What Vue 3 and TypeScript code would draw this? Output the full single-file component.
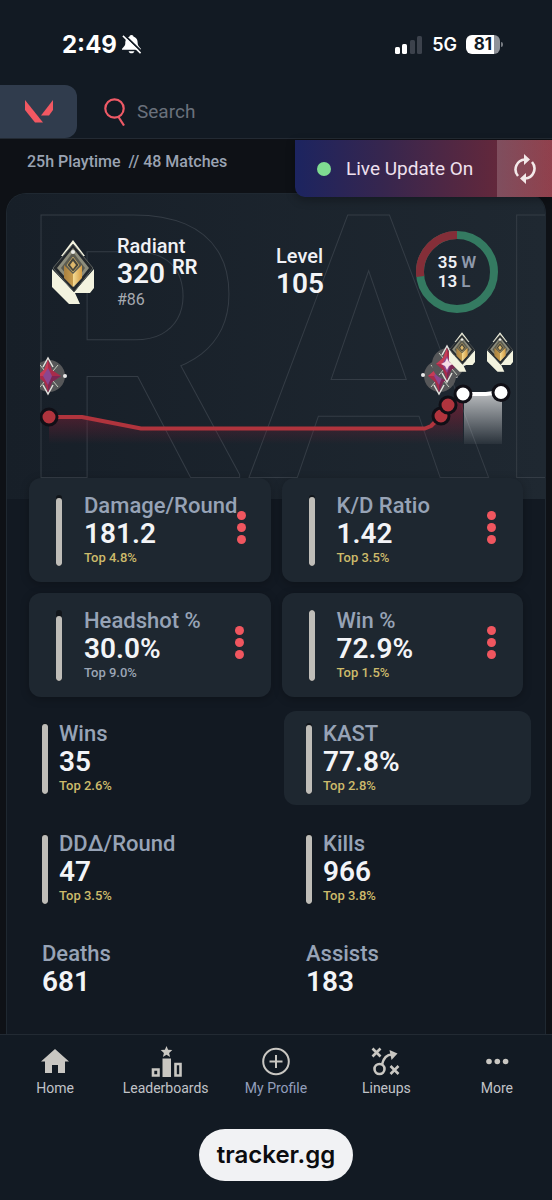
<script setup lang="ts">
interface Stat {
  label: string
  value: string
  top?: string
  muted?: boolean
  fill: number
  active?: boolean
}

const featured: Stat[] = [
  { label: 'Damage/Round', value: '181.2', top: 'Top 4.8%', fill: 95 },
  { label: 'K/D Ratio', value: '1.42', top: 'Top 3.5%', fill: 97 },
  { label: 'Headshot %', value: '30.0%', top: 'Top 9.0%', muted: true, fill: 91 },
  { label: 'Win %', value: '72.9%', top: 'Top 1.5%', fill: 99 },
]

const stats: Stat[] = [
  { label: 'Wins', value: '35', top: 'Top 2.6%', fill: 98 },
  { label: 'KAST', value: '77.8%', top: 'Top 2.8%', fill: 97, active: true },
  { label: 'DDΔ/Round', value: '47', top: 'Top 3.5%', fill: 97 },
  { label: 'Kills', value: '966', top: 'Top 3.8%', fill: 97 },
  { label: 'Deaths', value: '681', fill: 0 },
  { label: 'Assists', value: '183', fill: 0 },
]

const radiantMarks = [
  { x: 449, y: 332 },
  { x: 487, y: 332 },
]
const immortalMarks = [
  { x: 48, y: 376 },
  { x: 439, y: 376 },
  { x: 447, y: 364 },
]
</script>

<template>
  <div class="page">
    <svg class="defs" width="0" height="0" aria-hidden="true">
      <defs>
        <linearGradient id="gold" x1="0" x2="1">
          <stop offset="0" stop-color="#a9803f" />
          <stop offset=".48" stop-color="#c69a4c" />
          <stop offset=".5" stop-color="#f5dc96" />
          <stop offset="1" stop-color="#d59d43" />
        </linearGradient>
        <symbol id="radiant" viewBox="0 0 42 64">
          <path d="M0 29 22 52 42 29V48L38 53H23L28 64H17L0 47Z" fill="#f3f3df" />
          <path d="M21 0 33 16H9Z" fill="#f3f3df" />
          <path d="M21 4 41 28 22 52 1 28Z" fill="#23282c" stroke="#5d625f" stroke-width="1" />
          <path d="M21 8 37 28 22 47 5 28Z" fill="#8d8d7c" />
          <path d="M21 12 33 28 22 44 9 28Z" fill="#5b5b50" />
          <path d="M12 25 21 34 30 25V38L21 47 12 38Z" fill="url(#gold)" />
          <path d="M21 17 27 25 21 32 15 25Z" fill="#44443b" stroke="#b79e62" stroke-width="1" />
          <path d="M21 21 24 25 21 29 18 25Z" fill="#ddb86c" />
          <circle cx="21" cy="12" r="2" fill="#eceeea" />
        </symbol>
        <symbol id="immortal" viewBox="0 0 40 40">
          <circle cx="20" cy="20" r="16" fill="#565759" />
          <path d="m11 9 5 6M29 9l-5 6M11 31l5-6M29 31l-5-6" stroke="#c5cbbd" stroke-width="1" />
          <path d="M14 11 19 2 24 11M14 29l5 9 5-9" fill="none" stroke="#e4e1dd" stroke-width="1.5" />
          <path d="M19 4 23 14 32 20 23 26 19 36 15 26 8 20 15 14Z" fill="#a82b4b" />
          <path d="M19 4 19 20 8 20 15 14Z" fill="#c63c56" />
          <path d="M19 20 32 20 23 26 19 36Z" fill="#7b2754" />
          <path d="M19 12 23 20 19 29 14 20Z" fill="#8b4690" />
          <circle cx="36" cy="20" r="2" fill="#e9e9e9" />
        </symbol>
      </defs>
    </svg>

    <div class="status">
      <div class="clock">
        <span>2:49</span>
        <svg width="21" height="21" viewBox="0 0 22 22" aria-label="Silent">
          <path d="M11 1C9.500 1 9 2 8.700 2.800 5 4 4.500 7 4.500 10c0 3-3.500 4.500-3.500 6.500h20C21 14.500 17.500 13 17.500 10c0-3-.5-6-4.200-7.200C13 2 12.500 1 11 1ZM8 18h6c-.5 3-5.500 3-6 0Z" fill="#fff" />
          <path d="M3.500 1 22 19" stroke="#121a23" stroke-width="2" />
          <path d="M2 2 20.500 20" stroke="#fff" stroke-width="1.600" />
        </svg>
      </div>
      <div class="signal">
        <svg width="28" height="18" viewBox="0 0 28 18" aria-label="Signal">
          <rect x="0" y="11" width="5" height="7" rx="1.500" fill="#fff" />
          <rect x="7" y="8" width="5" height="10" rx="1.500" fill="#fff" />
          <rect x="15" y="4" width="5" height="14" rx="1.500" fill="#3c424c" />
          <rect x="22" y="0" width="5" height="18" rx="1.500" fill="#3c424c" />
        </svg>
        <span class="network">5G</span>
        <span class="battery">81</span>
      </div>
    </div>

    <header class="header">
      <button class="game" type="button" aria-label="Valorant">
        <svg width="28" height="23" viewBox="0 0 28 23">
          <path d="M0 0 18 22.500H10L0 10Z" fill="#f25862" />
          <path d="M28 0V10L24 15.500H16Z" fill="#f25862" />
        </svg>
      </button>
      <label class="search">
        <svg width="22" height="28" viewBox="0 0 22 28" fill="none" stroke="#ee5a66" stroke-width="2.200" aria-hidden="true">
          <circle cx="10.500" cy="10.500" r="9.200" />
          <path d="m14.500 19 5.500 8.500" />
        </svg>
        <input type="text" placeholder="Search" aria-label="Search" />
      </label>
    </header>

    <div class="session">
      <p>25h Playtime&nbsp; // 48 Matches</p>
      <div class="live">
        <span class="live-text"><i></i>Live Update On</span>
        <button type="button" aria-label="Refresh">
          <svg width="24" height="30" viewBox="0 0 24 30" fill="none" stroke="#f3e9e9" stroke-width="2.600">
            <path d="M5 22A10 10 0 0 1 12 5.500M19 8A10 10 0 0 1 12 24.500" />
            <path d="M11 0 17 5.500 11 11ZM13 19 7 24.500 13 30Z" fill="#f3e9e9" stroke="none" />
          </svg>
        </button>
      </div>
    </div>

    <main class="card">
      <section class="hero">
        <svg class="watermark" aria-hidden="true">
          <defs>
            <linearGradient id="heroFill" x1="0" y1="0" x2="538" y2="0" gradientUnits="userSpaceOnUse">
              <stop offset="0" stop-color="#171f28" />
              <stop offset="1" stop-color="#1f2831" />
            </linearGradient>
          </defs>
          <text x="8" y="283">RAD</text>
        </svg>
        <div class="summary">
          <div class="rank">
            <svg width="42" height="64" aria-label="Radiant rank"><use href="#radiant" /></svg>
            <div>
              <div class="caption">Radiant</div>
              <div class="big">320 <sup>RR</sup></div>
              <div class="place">#86</div>
            </div>
          </div>
          <div class="level">
            <div class="caption">Level</div>
            <div class="big">105</div>
          </div>
          <div class="record">
            <svg width="82" height="82" viewBox="0 0 82 82" aria-hidden="true">
              <circle cx="41" cy="41" r="37" fill="none" stroke="#347a61" stroke-width="8" />
              <path d="M4.300 45.500A37 37 0 0 1 41 4" fill="none" stroke="#842e38" stroke-width="8" />
            </svg>
            <div class="tally">
              <div>35 <span>W</span></div>
              <div>13 <span>L</span></div>
            </div>
          </div>
        </div>

        <svg class="chart" viewBox="7 325 538 130" role="img" aria-label="Rank rating history">
          <defs>
            <linearGradient id="redfade" x1="0" y1="400" x2="0" y2="444" gradientUnits="userSpaceOnUse">
              <stop offset="0" stop-color="#7b1f35" stop-opacity=".8" />
              <stop offset="1" stop-color="#7b1f35" stop-opacity="0" />
            </linearGradient>
            <linearGradient id="whitefade" x1="0" y1="392" x2="0" y2="444" gradientUnits="userSpaceOnUse">
              <stop offset="0" stop-color="#fff" stop-opacity=".7" />
              <stop offset="1" stop-color="#fff" stop-opacity=".05" />
            </linearGradient>
            <clipPath id="plot"><rect x="40" y="325" width="480" height="130" /></clipPath>
          </defs>
          <g clip-path="url(#plot)">
            <path d="M49 417H82L141 428H426L441 416 448 405 463 394V444H49Z" fill="url(#redfade)" />
            <path d="M464 394H487L502 392V444H464Z" fill="url(#whitefade)" />
            <path d="M49 417H82L141 428.500H425L431 426 441 416 448 405" fill="none" stroke="#b0343d" stroke-width="4" stroke-linejoin="round" />
            <path d="M463 394H486L501 392" fill="none" stroke="#fff" stroke-width="4" />
            <circle cx="49" cy="417" r="8" fill="#b0343d" stroke="#100f16" stroke-width="3" />
            <circle cx="441" cy="416" r="8" fill="#b0343d" stroke="#100f16" stroke-width="3" />
            <circle cx="448" cy="405" r="8" fill="#b0343d" stroke="#100f16" stroke-width="3" />
            <circle cx="463" cy="394" r="8" fill="#fff" stroke="#100f16" stroke-width="3" />
            <circle cx="501" cy="392.500" r="8" fill="#fff" stroke="#100f16" stroke-width="3" />
            <use v-for="m in immortalMarks" :key="m.x" href="#immortal" :x="m.x - 19" :y="m.y - 20" width="40" height="40" />
            <path d="m447 358 2 4 4 2-4 2-2 4-2-4-4-2 4-2Z" fill="#f5dce5" />
            <circle cx="423" cy="375" r="2" fill="#e9e9e9" />
            <use v-for="m in radiantMarks" :key="m.x" href="#radiant" :x="m.x" :y="m.y" width="26" height="40" />
          </g>
        </svg>
      </section>

      <section class="featured">
        <article v-for="s in featured" :key="s.label" class="tile">
          <div class="meter"><i :style="{ height: s.fill + '%' }"></i></div>
          <div class="info">
            <div class="label">{{ s.label }}</div>
            <div class="value">{{ s.value }}</div>
            <div class="top" :class="{ muted: s.muted }">{{ s.top }}</div>
          </div>
          <button type="button" class="dots" :aria-label="s.label + ' options'"><i></i><i></i><i></i></button>
        </article>
      </section>

      <section class="stats">
        <article v-for="s in stats" :key="s.label" class="stat" :class="{ active: s.active, plain: !s.top }">
          <div v-if="s.top" class="meter"><i :style="{ height: s.fill + '%' }"></i></div>
          <div class="info">
            <div class="label">{{ s.label }}</div>
            <div class="value">{{ s.value }}</div>
            <div v-if="s.top" class="top">{{ s.top }}</div>
          </div>
        </article>
      </section>
    </main>

    <footer class="footer">
      <nav>
        <a href="#home">
          <svg width="32" height="32" viewBox="0 0 32 32"><path d="M16 3 30 15.500H26V27H19V19H13V27H6V15.500H2Z" fill="#c9c7c2" /></svg>
          Home
        </a>
        <a href="#leaderboards">
          <svg width="32" height="32" viewBox="0 0 32 32">
            <path d="m16.500 0 1.600 3.800 4.200.3-3.200 2.800 1 4.100-3.600-2.200-3.600 2.200 1-4.100-3.200-2.800 4.200-.3Z" fill="#c9c7c2" />
            <path d="M12.500 12.500h8.500v18.500h-8.500Z" fill="#c9c7c2" />
            <path d="M3 23.500h5.500v6H3ZM25.500 18h5v11.500h-5Z" fill="none" stroke="#c9c7c2" stroke-width="2.600" />
          </svg>
          Leaderboards
        </a>
        <a href="#profile" class="current">
          <svg width="32" height="32" viewBox="0 0 32 32" fill="none" stroke="#c9c7c2" stroke-width="2"><circle cx="16" cy="15.500" r="12.800" /><path d="M16 9v13M9.500 15.500h13" /></svg>
          My Profile
        </a>
        <a href="#lineups">
          <svg width="32" height="32" viewBox="0 0 32 32" fill="none" stroke="#c9c7c2" stroke-width="2.600">
            <path d="m2.500 2.500 8 8M10.500 2.500l-8 8M20.500 20l8 8M28.500 20l-8 8" />
            <circle cx="9.500" cy="23" r="5" />
            <path d="M12 18.500C13.500 12 17 8.500 22 8.500" />
            <path d="M19.500 4 27.500 7.500 21.500 14Z" fill="#c9c7c2" stroke="none" />
          </svg>
          Lineups
        </a>
        <a href="#more">
          <svg width="32" height="32" viewBox="0 0 32 32" fill="#c9c7c2"><circle cx="8" cy="15.500" r="2.800" /><circle cx="16.300" cy="15.500" r="2.800" /><circle cx="24.600" cy="15.500" r="2.800" /></svg>
          More
        </a>
      </nav>
      <a class="site" href="#site">tracker.gg</a>
    </footer>
  </div>
</template>

<style>
body {
  background: #0e1116;
}
</style>

<style scoped>
* {
  box-sizing: border-box;
}
.page {
  display: flex;
  flex-direction: column;
  min-height: 100vh;
  background: #0e1116;
  color: #f0f1f5;
  font-family: Roboto, "Liberation Sans", sans-serif;
  overflow: hidden;
}
.defs {
  position: absolute;
}
button {
  border: 0;
  padding: 0;
  background: none;
  font: inherit;
}
svg {
  display: block;
  flex: none;
}
.status {
  display: flex;
  justify-content: space-between;
  align-items: center;
  height: 85px;
  padding: 4px 52px 0 62px;
  background: #121a23;
  color: #fff;
  font-family: Inter, "Liberation Sans", sans-serif;
  font-weight: 700;
}
.clock,
.signal {
  display: flex;
  align-items: center;
}
.clock {
  gap: 4px;
  font-size: 24px;
}
.signal {
  gap: 9px;
}
.network {
  font-size: 18px;
  font-weight: 600;
}
.battery {
  position: relative;
  width: 34px;
  height: 19px;
  border-radius: 6px;
  background: linear-gradient(90deg, #fff 81%, #8f9298 81%);
  color: #121a23;
  font-size: 17px;
  line-height: 19px;
  text-align: center;
}
.battery::after {
  content: "";
  position: absolute;
  left: 35px;
  top: 7px;
  width: 2px;
  height: 5px;
  border-radius: 0 2px 2px 0;
  background: #777b82;
}
.header {
  display: flex;
  height: 54px;
  background: #121a23;
  border-bottom: 1px solid #232a33;
}
.game {
  display: flex;
  justify-content: center;
  align-items: center;
  width: 77px;
  border-radius: 0 12px 12px 0;
  background: #303c4d;
}
.search {
  display: flex;
  flex: 1;
  align-items: center;
  gap: 11px;
  padding-left: 27px;
}
.search input {
  flex: 1;
  min-width: 0;
  border: 0;
  padding: 0;
  outline: 0;
  background: none;
  color: #f0f1f5;
  font: 400 19px Roboto, "Liberation Sans", sans-serif;
}
.search input::placeholder {
  color: #6a717c;
  opacity: 1;
}
.session {
  position: relative;
  z-index: 1;
  height: 54px;
}
.session p {
  margin: 0;
  padding: 11px 0 0 27px;
  color: #9aa3b2;
  font-size: 16px;
  font-weight: 500;
  line-height: 24px;
}
.live {
  position: absolute;
  top: 1px;
  right: 0;
  display: flex;
  width: 257px;
  height: 57px;
  border-radius: 0 0 0 10px;
  background: linear-gradient(90deg, #1c2460, #37264e 35%, #64283b 80%, #75303f);
  box-shadow: 0 3px 10px rgba(0, 0, 0, 0.3);
  overflow: hidden;
}
.live-text {
  display: flex;
  flex: 1;
  align-items: center;
  gap: 15px;
  padding-left: 22px;
  color: #efe0ee;
  font-size: 19px;
}
.live-text i {
  width: 14px;
  height: 14px;
  border-radius: 50%;
  background: #7fdc91;
}
.live button {
  display: flex;
  justify-content: center;
  align-items: center;
  width: 55px;
  background: linear-gradient(90deg, rgba(255, 255, 255, 0.18), rgba(255, 130, 130, 0.2));
}
.card {
  flex: 1;
  margin: 0 6px;
  border: 1px solid #1f2831;
  border-bottom: 0;
  border-radius: 20px 20px 0 0;
  background: #121922;
  overflow: hidden;
}
.hero {
  position: relative;
  height: 305px;
  background: linear-gradient(90deg, #171f28, #1f2831);
}
.watermark {
  position: absolute;
  inset: 0;
  width: 100%;
  height: 100%;
}
.watermark text {
  fill: url(#heroFill);
  stroke: #343c45;
  stroke-width: 2px;
  paint-order: stroke;
  font-size: 368px;
  font-weight: 500;
}
.summary {
  position: relative;
  display: grid;
  grid-template-columns: 224px 1fr auto;
  align-items: center;
  height: 131px;
  padding: 24px 47px 0 45px;
}
.rank {
  display: flex;
  align-items: center;
  gap: 23px;
}
.caption {
  font-size: 20px;
  font-weight: 500;
  line-height: 24px;
}
.big,
.value {
  color: #f3f4f7;
  font-size: 28px;
  font-weight: 600;
}
.big {
  line-height: 32px;
}
.value {
  line-height: 30px;
}
.big sup {
  font-size: 20px;
  line-height: 0;
  vertical-align: 9px;
}
.place {
  color: #a6aab1;
  font-size: 16px;
  line-height: 20px;
}
.record {
  display: grid;
  place-items: center;
}
.record > * {
  grid-area: 1 / 1;
}
.tally {
  font-size: 17px;
  font-weight: 600;
  line-height: 19px;
}
.tally span {
  color: #8f99ab;
}
.chart {
  position: relative;
  width: 100%;
  height: auto;
}
.featured {
  position: relative;
  display: grid;
  grid-template-columns: repeat(2, minmax(0, 1fr));
  gap: 11px;
  margin-top: -21px;
  padding: 0 22px;
}
.tile {
  display: flex;
  align-items: center;
  height: 104px;
  padding: 0 27px;
  border-radius: 12px;
  background: #1e2730;
  box-shadow: 0 2px 8px rgba(0, 0, 0, 0.25);
}
.meter {
  display: flex;
  align-items: flex-end;
  flex: none;
  width: 6px;
  height: 71px;
  border-radius: 3px;
  background: #11151a;
  overflow: hidden;
}
.meter i {
  width: 100%;
  border-radius: 3px;
  background: #bfbdb8;
}
.info {
  flex: 1;
  white-space: nowrap;
}
.tile .info {
  padding-left: 22px;
}
.label {
  color: #97a3b6;
  font-size: 22px;
  font-weight: 500;
  line-height: 26px;
}
.top {
  color: #cdbb6b;
  font-size: 13px;
  font-weight: 500;
  line-height: 18px;
}
.top.muted {
  color: #9ba5b5;
}
.dots {
  display: flex;
  flex: none;
  flex-direction: column;
  gap: 3px;
  margin-top: -5px;
}
.dots i {
  width: 9px;
  height: 9px;
  border-radius: 50%;
  background: #f0565f;
}
.stats {
  display: grid;
  grid-template-columns: repeat(2, minmax(0, 1fr));
  gap: 16px 17px;
  padding: 14px 14px 0 13px;
}
.stat {
  display: flex;
  align-items: center;
  gap: 11px;
  height: 94px;
  padding-left: 22px;
  border-radius: 12px;
}
.stat.plain {
  height: 76px;
}
.stat.active {
  background: #1e2730;
}
.footer {
  height: 166px;
  border-top: 1px solid #222a33;
  background: #121a23;
}
nav {
  display: grid;
  grid-template-columns: repeat(5, 1fr);
  padding-top: 11px;
}
nav a {
  display: flex;
  flex-direction: column;
  align-items: center;
  gap: 1px;
  color: #c1c3c8;
  font-size: 14px;
  line-height: 18px;
  text-decoration: none;
}
nav a.current {
  color: #929fbc;
}
.site {
  display: block;
  width: max-content;
  margin: 32px auto 0;
  padding: 0 18px;
  border-radius: 26px;
  background: #f1f2f4;
  color: #0b0c0f;
  font-family: Inter, "Liberation Sans", sans-serif;
  font-size: 24px;
  font-weight: 600;
  line-height: 52px;
  text-decoration: none;
}
</style>
